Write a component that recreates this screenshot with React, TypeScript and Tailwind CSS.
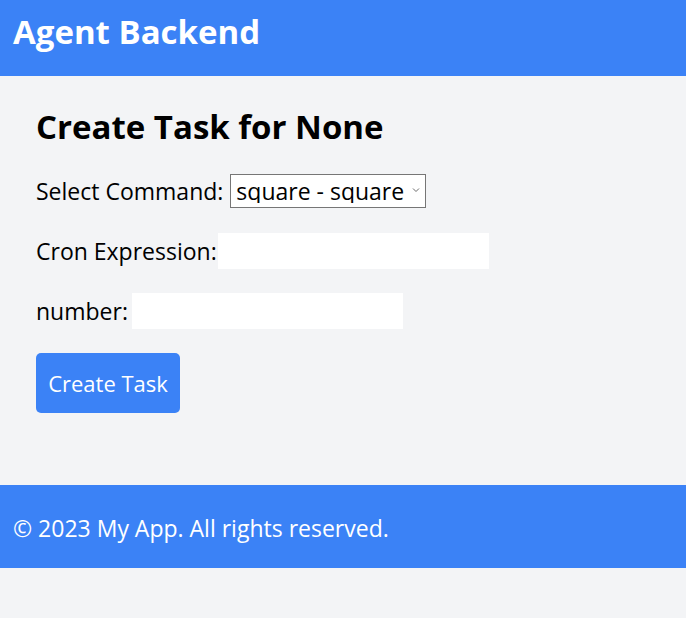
import React from "react";

const App = () => {
    return (
        <div className="min-h-[618px] bg-[#f3f4f6] text-black font-['Open_Sans',sans-serif]">
            <header className="bg-[#3b82f6] h-[76px] flex items-center px-[13px] pb-[13px]">
                <h1 className="text-white text-[33px] font-bold leading-none">Agent Backend</h1>
            </header>

            <main className="px-[36px] pt-[33px] pb-[72px]">
                <h2 className="text-[33px] font-bold leading-[36px] mb-[28px]">Create Task for None</h2>
                <form className="flex flex-col gap-[24px] text-[23px]" onSubmit={(e) => e.preventDefault()}>
                    <div className="flex items-center h-[36px]">
                        <label className="mr-[7px]">Select Command:</label>
                        <div className="relative">
                            <select className="appearance-none bg-white border border-[#767676] h-[34px] w-[196px] pl-[5px] pr-[18px] text-[23px] leading-none outline-none">
                                <option>square - square</option>
                            </select>
                            <svg className="absolute right-[6px] top-[13px] pointer-events-none" width="8" height="6" viewBox="0 0 8 6">
                                <path d="M1 1.5 L4 4.5 L7 1.5" fill="none" stroke="#6b6b6b" strokeWidth="1" />
                            </svg>
                        </div>
                    </div>
                    <div className="flex items-center h-[36px]">
                        <label className="mr-[1px]">Cron Expression:</label>
                        <input type="text" className="bg-white h-[36px] w-[271px] outline-none px-2" />
                    </div>
                    <div className="flex items-center h-[36px]">
                        <label className="mr-[4px]">number:</label>
                        <input type="text" className="bg-white h-[36px] w-[271px] outline-none px-2" />
                    </div>
                    <div>
                        <button type="submit" className="bg-[#3b82f6] text-white h-[60px] w-[144px] rounded-[5px] text-[22px]">
                            Create Task
                        </button>
                    </div>
                </form>
            </main>

            <footer className="bg-[#3b82f6] h-[83px] flex items-center px-[13px] pt-[3px] text-white text-[23px]">
                © 2023 My App. All rights reserved.
            </footer>
        </div>
    );
};

export default App;
